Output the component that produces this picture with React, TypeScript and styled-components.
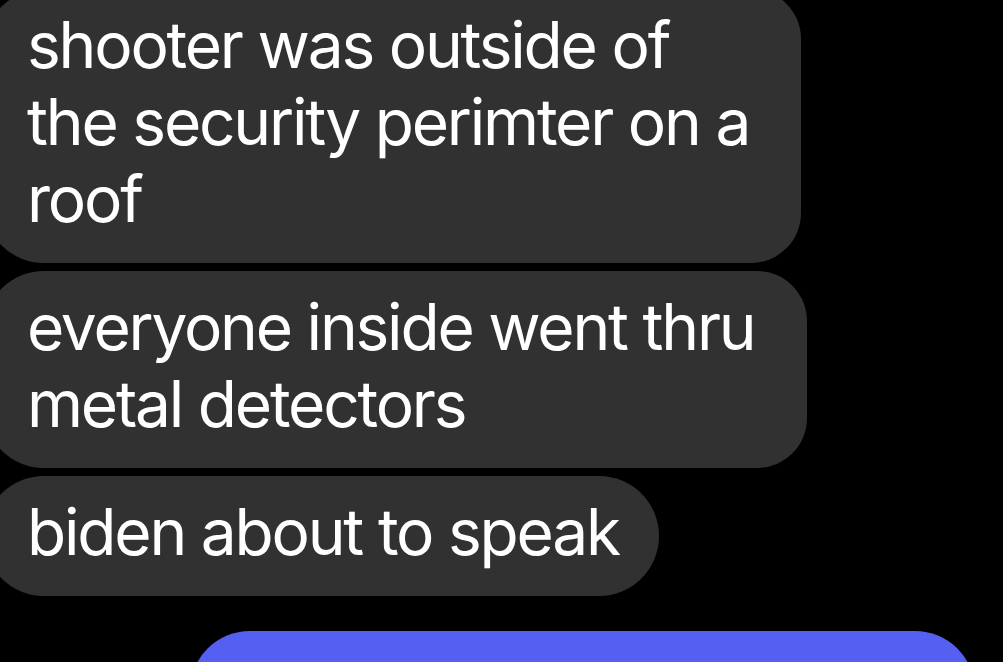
import styled, { createGlobalStyle } from 'styled-components'

const GlobalStyle = createGlobalStyle`
  html, body {
    margin: 0;
    padding: 0;
    background: #000;
    overflow: hidden;
  }
  body {
    width: 1003px;
    height: 662px;
  }
`

const Thread = styled.div`
  display: flex;
  flex-direction: column;
  align-items: flex-start;
  gap: 8px;
  margin-top: -11px;
  font-family: Inter, "Liberation Sans", sans-serif;
`

const Bubble = styled.div<{ $pill?: boolean }>`
  box-sizing: border-box;
  margin-left: -16px;
  padding: 17px ${(p) => (p.$pill ? '40px' : '52px')} 26px 43px;
  border-radius: ${(p) => (p.$pill ? '60px' : '60px 50px 50px 60px')};
  background: #313131;
  color: #fff;
  font-size: 64px;
  line-height: 77px;
  letter-spacing: -2.2px;
  white-space: nowrap;
`

const SentBubble = styled.div`
  align-self: flex-end;
  margin: 27px 28px 0 0;
  width: 785px;
  height: 120px;
  border-radius: 60px;
  background: #5560f2;
`

const messages = [
  ['shooter was outside of', 'the security perimter on a', 'roof'],
  ['everyone inside went thru', 'metal detectors'],
  ['biden about to speak'],
]

export default function App() {
  return (
    <>
      <GlobalStyle />
      <Thread>
        {messages.map((lines, i) => (
          <Bubble key={i} $pill={lines.length === 1}>
            {lines.map((line, j) => (
              <span key={j}>
                {line}
                {j < lines.length - 1 && <br />}
              </span>
            ))}
          </Bubble>
        ))}
        <SentBubble />
      </Thread>
    </>
  )
}
